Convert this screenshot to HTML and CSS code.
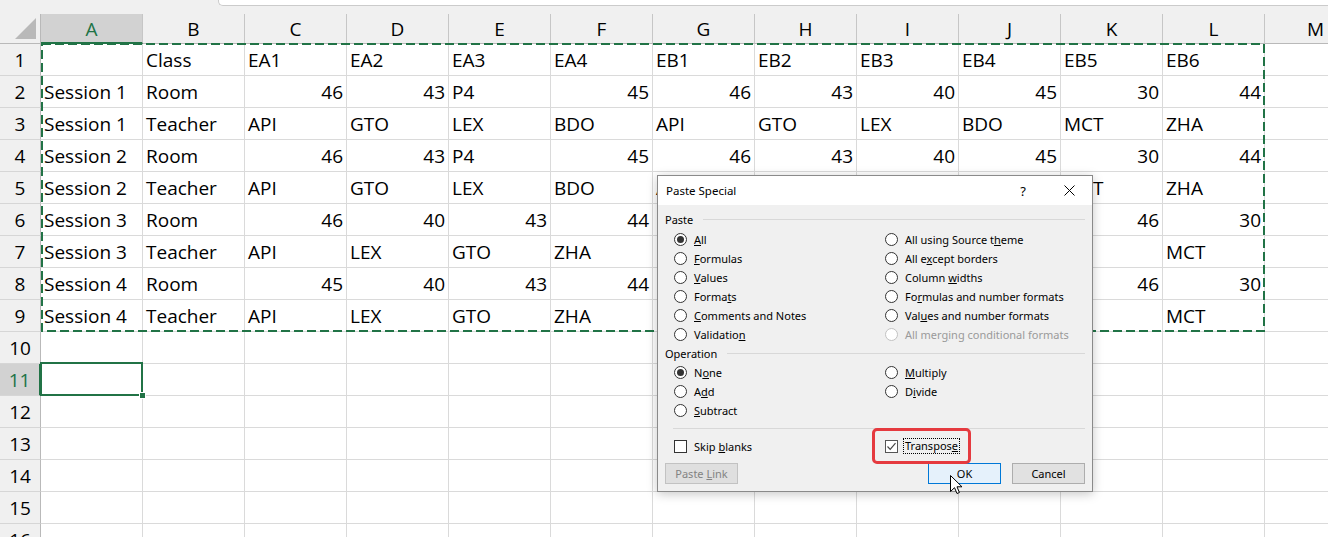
FILE: index.html
```html
<!DOCTYPE html>
<html>
<head>
<meta charset="utf-8">
<link rel="stylesheet" href="styles.css">
</head>
<body>
<div class="topbar"><div class="fbar"></div></div>
<div class="sheet">
  <div class="hd corner"><svg width="40" height="29" viewBox="0 0 40 29"><polygon points="36,4 36,25 15,25" fill="#b9b9b9"/></svg></div>
  <div class="hd sel-col">A</div><div class="hd">B</div><div class="hd">C</div><div class="hd">D</div><div class="hd">E</div><div class="hd">F</div><div class="hd">G</div><div class="hd">H</div><div class="hd">I</div><div class="hd">J</div><div class="hd">K</div><div class="hd">L</div><div class="hd">M</div>

  <div class="rh">1</div><div class="c"></div><div class="c">Class</div><div class="c">EA1</div><div class="c">EA2</div><div class="c">EA3</div><div class="c">EA4</div><div class="c">EB1</div><div class="c">EB2</div><div class="c">EB3</div><div class="c">EB4</div><div class="c">EB5</div><div class="c">EB6</div><div class="c"></div>

  <div class="rh">2</div><div class="c">Session 1</div><div class="c">Room</div><div class="c n">46</div><div class="c n">43</div><div class="c">P4</div><div class="c n">45</div><div class="c n">46</div><div class="c n">43</div><div class="c n">40</div><div class="c n">45</div><div class="c n">30</div><div class="c n">44</div><div class="c"></div>

  <div class="rh">3</div><div class="c">Session 1</div><div class="c">Teacher</div><div class="c">API</div><div class="c">GTO</div><div class="c">LEX</div><div class="c">BDO</div><div class="c">API</div><div class="c">GTO</div><div class="c">LEX</div><div class="c">BDO</div><div class="c">MCT</div><div class="c">ZHA</div><div class="c"></div>

  <div class="rh">4</div><div class="c">Session 2</div><div class="c">Room</div><div class="c n">46</div><div class="c n">43</div><div class="c">P4</div><div class="c n">45</div><div class="c n">46</div><div class="c n">43</div><div class="c n">40</div><div class="c n">45</div><div class="c n">30</div><div class="c n">44</div><div class="c"></div>

  <div class="rh">5</div><div class="c">Session 2</div><div class="c">Teacher</div><div class="c">API</div><div class="c">GTO</div><div class="c">LEX</div><div class="c">BDO</div><div class="c">API</div><div class="c"></div><div class="c"></div><div class="c"></div><div class="c">MCT</div><div class="c">ZHA</div><div class="c"></div>

  <div class="rh">6</div><div class="c">Session 3</div><div class="c">Room</div><div class="c n">46</div><div class="c n">40</div><div class="c n">43</div><div class="c n">44</div><div class="c"></div><div class="c"></div><div class="c"></div><div class="c"></div><div class="c n">46</div><div class="c n">30</div><div class="c"></div>

  <div class="rh">7</div><div class="c">Session 3</div><div class="c">Teacher</div><div class="c">API</div><div class="c">LEX</div><div class="c">GTO</div><div class="c">ZHA</div><div class="c"></div><div class="c"></div><div class="c"></div><div class="c"></div><div class="c">API</div><div class="c">MCT</div><div class="c"></div>

  <div class="rh">8</div><div class="c">Session 4</div><div class="c">Room</div><div class="c n">45</div><div class="c n">40</div><div class="c n">43</div><div class="c n">44</div><div class="c"></div><div class="c"></div><div class="c"></div><div class="c"></div><div class="c n">46</div><div class="c n">30</div><div class="c"></div>

  <div class="rh">9</div><div class="c">Session 4</div><div class="c">Teacher</div><div class="c">API</div><div class="c">LEX</div><div class="c">GTO</div><div class="c">ZHA</div><div class="c"></div><div class="c"></div><div class="c"></div><div class="c"></div><div class="c">API</div><div class="c">MCT</div><div class="c"></div>

  <div class="rh">10</div><div class="c"></div><div class="c"></div><div class="c"></div><div class="c"></div><div class="c"></div><div class="c"></div><div class="c"></div><div class="c"></div><div class="c"></div><div class="c"></div><div class="c"></div><div class="c"></div><div class="c"></div>
  <div class="rh sel-row">11</div><div class="c"></div><div class="c"></div><div class="c"></div><div class="c"></div><div class="c"></div><div class="c"></div><div class="c"></div><div class="c"></div><div class="c"></div><div class="c"></div><div class="c"></div><div class="c"></div><div class="c"></div>
  <div class="rh">12</div><div class="c"></div><div class="c"></div><div class="c"></div><div class="c"></div><div class="c"></div><div class="c"></div><div class="c"></div><div class="c"></div><div class="c"></div><div class="c"></div><div class="c"></div><div class="c"></div><div class="c"></div>
  <div class="rh">13</div><div class="c"></div><div class="c"></div><div class="c"></div><div class="c"></div><div class="c"></div><div class="c"></div><div class="c"></div><div class="c"></div><div class="c"></div><div class="c"></div><div class="c"></div><div class="c"></div><div class="c"></div>
  <div class="rh">14</div><div class="c"></div><div class="c"></div><div class="c"></div><div class="c"></div><div class="c"></div><div class="c"></div><div class="c"></div><div class="c"></div><div class="c"></div><div class="c"></div><div class="c"></div><div class="c"></div><div class="c"></div>
  <div class="rh">15</div><div class="c"></div><div class="c"></div><div class="c"></div><div class="c"></div><div class="c"></div><div class="c"></div><div class="c"></div><div class="c"></div><div class="c"></div><div class="c"></div><div class="c"></div><div class="c"></div><div class="c"></div>
  <div class="rh">16</div><div class="c"></div><div class="c"></div><div class="c"></div><div class="c"></div><div class="c"></div><div class="c"></div><div class="c"></div><div class="c"></div><div class="c"></div><div class="c"></div><div class="c"></div><div class="c"></div><div class="c"></div>
</div>

<svg class="ants" width="1230" height="295" viewBox="0 0 1230 295"><rect x="2" y="2" width="1222" height="287" fill="none" stroke="#217346" stroke-width="2" stroke-dasharray="9 4"/></svg>
<div class="cursel"></div>
<div class="handle"></div>

<div class="dlg">
  <div class="dlg-title">
    <span class="ttl">Paste Special</span>
    <span class="tbtn">?</span>
    <span class="tbtn"><svg width="11" height="11" viewBox="0 0 11 11"><path d="M0.5 0.5 L10.5 10.5 M10.5 0.5 L0.5 10.5" stroke="#000" stroke-width="1"/></svg></span>
  </div>
  <div class="dlg-body">
    <div class="glabel"><span>Paste</span><span class="rule"></span></div>
    <div class="opts first">
      <label class="opt"><span class="radio on"></span><span><u>A</u>ll</span></label>
      <label class="opt"><span class="radio"></span><span>All using Source t<u>h</u>eme</span></label>
      <label class="opt"><span class="radio"></span><span><u>F</u>ormulas</span></label>
      <label class="opt"><span class="radio"></span><span>All e<u>x</u>cept borders</span></label>
      <label class="opt"><span class="radio"></span><span><u>V</u>alues</span></label>
      <label class="opt"><span class="radio"></span><span>Column <u>w</u>idths</span></label>
      <label class="opt"><span class="radio"></span><span>Forma<u>t</u>s</span></label>
      <label class="opt"><span class="radio"></span><span>Fo<u>r</u>mulas and number formats</span></label>
      <label class="opt"><span class="radio"></span><span><u>C</u>omments and Notes</span></label>
      <label class="opt"><span class="radio"></span><span>Val<u>u</u>es and number formats</span></label>
      <label class="opt"><span class="radio"></span><span>Validatio<u>n</u></span></label>
      <label class="opt dis"><span class="radio"></span><span>All mer<u>g</u>ing conditional formats</span></label>
    </div>
    <div class="glabel"><span>Operation</span><span class="rule"></span></div>
    <div class="opts second">
      <label class="opt"><span class="radio on"></span><span>N<u>o</u>ne</span></label>
      <label class="opt"><span class="radio"></span><span><u>M</u>ultiply</span></label>
      <label class="opt"><span class="radio"></span><span>A<u>d</u>d</span></label>
      <label class="opt"><span class="radio"></span><span>D<u>i</u>vide</span></label>
      <label class="opt"><span class="radio"></span><span><u>S</u>ubtract</span></label>
    </div>
    <div class="sep"></div>
    <div class="opts checks">
      <label class="opt"><span class="box"></span><span>Skip <u>b</u>lanks</span></label>
      <label class="opt focus-opt"><span class="box on"><svg width="11" height="11" viewBox="0 0 11 11"><path d="M1.5 5.5 L4.2 8.3 L9.5 2.2" fill="none" stroke="#444" stroke-width="1.2"/></svg></span><span class="focus">Transpos<u>e</u></span></label>
    </div>
    <div class="btns">
      <span class="btn disabled"><span>Paste <u>L</u>ink</span></span>
      <span class="btn ok"><span>OK</span></span>
      <span class="btn cancel"><span>Cancel</span></span>
    </div>
  </div>
  <div class="hl"></div>
</div>

<svg class="cursor" width="14" height="20" viewBox="0 0 14 20"><polygon points="0.5,0.5 0.5,16.5 4.5,12.7 7,18.5 9.4,17.5 7,11.8 12,11.8" fill="#fff" stroke="#000" stroke-width="1" stroke-linejoin="miter"/></svg>
</body>
</html>
```
FILE: styles.css
```css
* { box-sizing: border-box; }
html, body { margin: 0; padding: 0; }
body {
  width: 1328px;
  height: 537px;
  overflow: hidden;
  background: #fff;
  position: relative;
  font-family: "Open Sans", sans-serif;
  color: #000;
}

.topbar {
  height: 14px;
  background: #f0f0f0;
  padding-left: 218px;
}
.fbar {
  height: 6px;
  background: #fff;
  border-left: 1px solid #cbcbcb;
  border-bottom: 1px solid #cbcbcb;
  border-bottom-left-radius: 5px;
}

.sheet {
  display: grid;
  grid-template-columns: 41px repeat(13, 102px);
  grid-template-rows: 30px;
  grid-auto-rows: 32px;
  width: 1367px;
}

.c, .hd, .rh {
  border-right: 1px solid #dadada;
  border-bottom: 1px solid #dadada;
  font-size: 19px;
  line-height: 33px;
  padding: 0 3px;
  white-space: nowrap;
  overflow: hidden;
}
.c.n { text-align: right; padding-right: 3px; }

.hd {
  background: #f0f0f0;
  text-align: center;
  line-height: 30px;
  border-right-color: #c6c6c6;
  border-bottom-color: #b9b9b9;
}
.corner { padding: 0; border-right-color: #b9b9b9; }
.corner svg { display: block; }
.sel-col {
  background: #d2d2d2;
  color: #217346;
  border-bottom: 2px solid #217346;
}

.rh {
  background: #f0f0f0;
  text-align: center;
  padding: 0;
  border-right-color: #b9b9b9;
  border-bottom-color: #d6d6d6;
}
.sel-row {
  background: #d2d2d2;
  color: #217346;
  border-right: 2px solid #217346;
}

.ants {
  position: absolute;
  left: 40px;
  top: 42px;
}
.cursel {
  position: absolute;
  left: 40px;
  top: 362px;
  width: 103px;
  height: 34px;
  border: 2px solid #217346;
}
.handle {
  position: absolute;
  left: 139px;
  top: 392px;
  width: 7px;
  height: 7px;
  background: #217346;
  border: 1px solid #fff;
}

/* dialog */
.dlg {
  position: absolute;
  left: 657px;
  top: 175px;
  width: 436px;
  height: 317px;
  background: #f0f0f0;
  border: 1px solid #8a8a8a;
  box-shadow: 0 2px 10px rgba(0, 0, 0, 0.22);
  font-family: "Noto Sans", sans-serif;
  font-size: 11px;
  color: #000;
  z-index: 5;
}
.dlg-title {
  height: 29px;
  background: #fff;
  display: flex;
  align-items: center;
  padding-left: 8px;
  font-size: 11.5px;
}
.ttl { flex: 1; }
.tbtn {
  width: 46px;
  height: 29px;
  display: flex;
  align-items: center;
  justify-content: center;
  font-size: 13px;
}
.dlg-body { padding: 5px 7px 0 7px; }

.glabel {
  display: flex;
  align-items: center;
  height: 18px;
}
.rule {
  flex: 1;
  height: 1px;
  background: #d8d8d8;
  margin-left: 10px;
}

.opts {
  display: grid;
  grid-template-columns: 211px 1fr;
  grid-auto-rows: 19px;
  padding-left: 9px;
}
.opts.first { margin-top: 2px; }
.opts.second { margin-top: 1px; }
.opts.checks { grid-auto-rows: 20px; margin-top: 7px; }

.opt {
  display: flex;
  align-items: center;
  gap: 7px;
  white-space: nowrap;
}
.radio {
  width: 13px;
  height: 13px;
  border-radius: 50%;
  border: 1px solid #333;
  background: #fff;
  flex: none;
  position: relative;
}
.radio.on::after {
  content: "";
  position: absolute;
  left: 2px;
  top: 2px;
  width: 7px;
  height: 7px;
  border-radius: 50%;
  background: #333;
}
.dis { color: #9a9a9a; }
.dis .radio { border-color: #c2c2c2; }

.box {
  width: 13px;
  height: 13px;
  border: 1px solid #333;
  background: #fff;
  flex: none;
  display: flex;
  align-items: center;
  justify-content: center;
}
.box.on { border-color: #555; }
.box svg { display: block; }
.focus-opt { gap: 5px; }
.focus {
  border: 1px dotted #000;
  padding: 0 1px;
  line-height: 14px;
}

.sep {
  height: 1px;
  background: #d8d8d8;
  margin: 8px 0 0 8px;
}

.btns {
  display: flex;
  margin-top: 7px;
}
.btn {
  width: 73px;
  height: 21px;
  border: 1px solid #adadad;
  background: #e1e1e1;
  display: flex;
  align-items: center;
  justify-content: center;
  white-space: nowrap;
}
.btn.disabled {
  color: #838383;
  border-color: #c2c2c2;
  background: #dfdfdf;
}
.btn.ok {
  margin-left: auto;
  border-color: #0078d7;
  background: #e5f1fb;
}
.btn.cancel { margin-left: 11px; }

.hl {
  position: absolute;
  left: 214px;
  top: 252px;
  width: 99px;
  height: 36px;
  border: 3px solid #e53a3f;
  border-radius: 5px;
}

.cursor {
  position: absolute;
  left: 950px;
  top: 475px;
  z-index: 6;
}
```
